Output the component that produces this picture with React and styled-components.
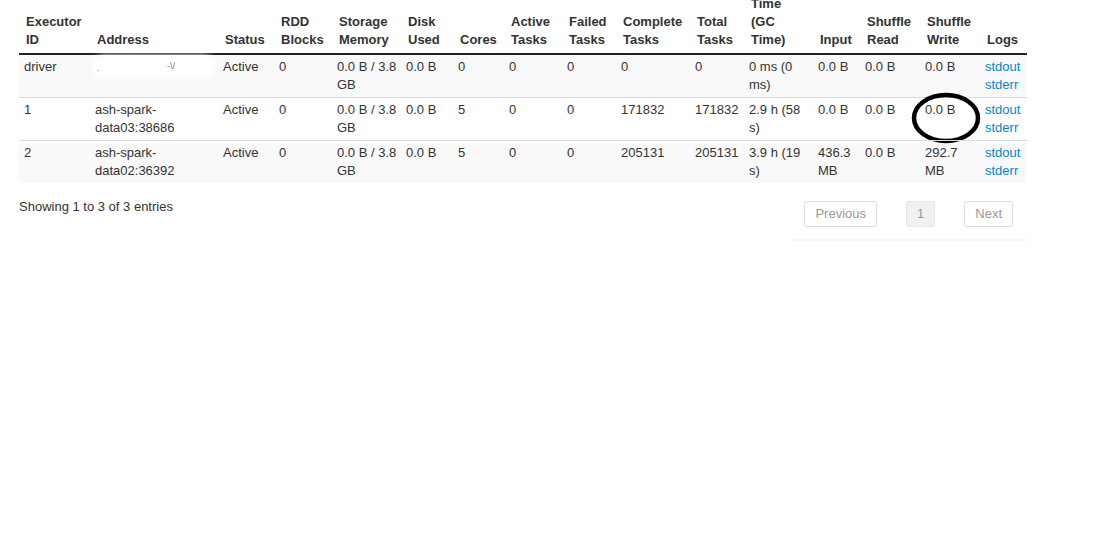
import React from "react";
import styled, { createGlobalStyle } from "styled-components";

const GlobalStyle = createGlobalStyle`
  html, body {
    margin: 0;
    padding: 0;
    background: #fff;
  }
  body {
    font-family: "Liberation Sans", Arial, sans-serif;
    font-size: 13px;
    line-height: 18px;
    color: #333;
  }
`;

const Page = styled.div`
  padding-left: 19px;
  margin-top: -27px;
  width: 1008px;
`;

const Table = styled.table`
  width: 1008px;
  table-layout: fixed;
  border-collapse: separate;
  border-spacing: 0;
`;

const Col = styled.col`
  width: ${(p) => p.$w}px;
`;

const Th = styled.th`
  text-align: left;
  vertical-align: bottom;
  font-weight: bold;
  padding: 4px 8px 4px 7px;
  border-bottom: 2px solid #222;
  color: #333;
`;

const Tr = styled.tr`
  background: ${(p) => (p.$striped ? "#f9f9f9" : "#fff")};
  &:last-child td:first-child {
    border-bottom-left-radius: 4px;
  }
  &:last-child td:last-child {
    border-bottom-right-radius: 4px;
  }
`;

const Td = styled.td`
  vertical-align: top;
  padding: 3px 3px 3px 5px;
  border-top: ${(p) => (p.$first ? "0" : "1px solid #ddd")};
  position: relative;
  word-wrap: break-word;
`;

const Link = styled.a`
  display: block;
  color: #0088cc;
  text-decoration: none;
`;

const Redacted = styled.span`
  display: inline-block;
  position: relative;
  width: 118px;
  height: 18px;
  background: #fff;
  border-radius: 9px;
  box-shadow: 0 0 5px 3px #fff;
  vertical-align: top;
`;

const Mark = styled.span`
  position: absolute;
  top: ${(p) => p.$t}px;
  left: ${(p) => p.$l}px;
  font-size: 9px;
  line-height: 9px;
  color: #777;
`;

const Circle = styled.svg`
  position: absolute;
  left: -9px;
  top: -7px;
  overflow: visible;
  pointer-events: none;
`;

const Footer = styled.div`
  display: flex;
  justify-content: space-between;
  align-items: flex-start;
`;

const Info = styled.div`
  padding-top: 15px;
`;

const Paginate = styled.div`
  display: flex;
  gap: 29px;
  margin-top: 18px;
  padding: 0 14px 12px 14px;
  border-bottom: 2px solid #f6f6f6;
`;

const PageButton = styled.span`
  display: inline-block;
  height: 26px;
  box-sizing: border-box;
  line-height: 24px;
  padding: 0 10px;
  border: 1px solid ${(p) => (p.$current ? "#e6e6e6" : "#dddddd")};
  border-radius: 3px;
  background: ${(p) => (p.$current ? "#f1f1f1" : "#fff")};
  color: #999;
`;

const widths = [71, 128, 56, 58, 69, 52, 51, 58, 54, 74, 54, 69, 47, 60, 60, 47];

const headers = [
  "Executor ID",
  "Address",
  "Status",
  "RDD Blocks",
  "Storage Memory",
  "Disk Used",
  "Cores",
  "Active Tasks",
  "Failed Tasks",
  "Complete Tasks",
  "Total Tasks",
  "Task Time (GC Time)",
  "Input",
  "Shuffle Read",
  "Shuffle Write",
  "Logs",
];

const rows = [
  {
    id: "driver",
    address: null,
    cores: "0",
    complete: "0",
    total: "0",
    time: "0 ms (0 ms)",
    input: "0.0 B",
    write: "0.0 B",
  },
  {
    id: "1",
    address: "ash-spark-data03:38686",
    cores: "5",
    complete: "171832",
    total: "171832",
    time: "2.9 h (58 s)",
    input: "0.0 B",
    write: "0.0 B",
    circled: true,
  },
  {
    id: "2",
    address: "ash-spark-data02:36392",
    cores: "5",
    complete: "205131",
    total: "205131",
    time: "3.9 h (19 s)",
    input: "436.3 MB",
    write: "292.7 MB",
  },
];

function AddressCell({ address }) {
  if (address === null) {
    return (
      <Redacted>
        <Mark $t={6} $l={2}>.</Mark>
        <Mark $t={4} $l={72}>-\/</Mark>
      </Redacted>
    );
  }
  const [host, port] = address.split(":");
  const parts = host.split("-");
  const head = parts.slice(0, 2).join("-") + "-";
  const tail = parts.slice(2).join("-");
  return (
    <>
      {head}
      <br />
      {tail}:{port}
    </>
  );
}

export default function App() {
  return (
    <Page>
      <GlobalStyle />
      <Table>
        <colgroup>
          {widths.map((w, i) => (
            <Col key={i} $w={w} />
          ))}
        </colgroup>
        <thead>
          <tr>
            {headers.map((h) => (
              <Th key={h}>{h}</Th>
            ))}
          </tr>
        </thead>
        <tbody>
          {rows.map((r, i) => (
            <Tr key={r.id} $striped={i % 2 === 0}>
              <Td $first={i === 0}>{r.id}</Td>
              <Td $first={i === 0}>
                <AddressCell address={r.address} />
              </Td>
              <Td $first={i === 0}>Active</Td>
              <Td $first={i === 0}>0</Td>
              <Td $first={i === 0}>0.0 B / 3.8 GB</Td>
              <Td $first={i === 0}>0.0 B</Td>
              <Td $first={i === 0}>{r.cores}</Td>
              <Td $first={i === 0}>0</Td>
              <Td $first={i === 0}>0</Td>
              <Td $first={i === 0}>{r.complete}</Td>
              <Td $first={i === 0}>{r.total}</Td>
              <Td $first={i === 0}>{r.time}</Td>
              <Td $first={i === 0}>{r.input}</Td>
              <Td $first={i === 0}>0.0 B</Td>
              <Td $first={i === 0}>
                {r.write}
                {r.circled && (
                  <Circle width="80" height="60" viewBox="0 0 80 60">
                    <ellipse
                      cx="35"
                      cy="27"
                      rx="32"
                      ry="23"
                      fill="none"
                      stroke="#000"
                      strokeWidth="4.5"
                    />
                  </Circle>
                )}
              </Td>
              <Td $first={i === 0}>
                <Link href="#">stdout</Link>
                <Link href="#">stderr</Link>
              </Td>
            </Tr>
          ))}
        </tbody>
      </Table>
      <Footer>
        <Info>Showing 1 to 3 of 3 entries</Info>
        <Paginate>
          <PageButton>Previous</PageButton>
          <PageButton $current>1</PageButton>
          <PageButton>Next</PageButton>
        </Paginate>
      </Footer>
    </Page>
  );
}
